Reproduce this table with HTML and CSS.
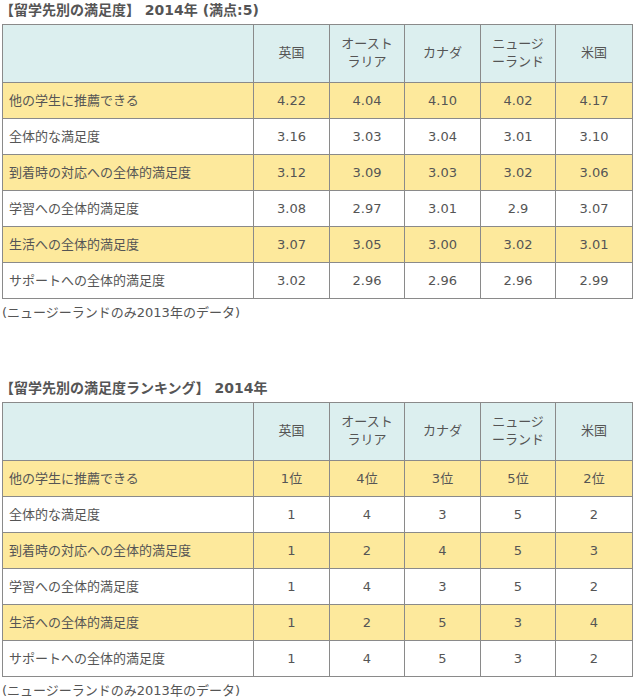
FILE: index.html
```html
<!DOCTYPE html>
<html lang="ja">
<head>
<meta charset="utf-8">
<link rel="stylesheet" href="styles.css">
</head>
<body>
<div class="page">
  <h2 class="title">【留学先別の満足度】 2014年 (満点:5)</h2>
  <table class="data">
    <colgroup>
      <col class="c-label"><col class="c-a"><col class="c-b"><col class="c-a"><col class="c-b"><col class="c-c">
    </colgroup>
    <thead>
      <tr class="head"><th></th><th>英国</th><th>オースト<br>ラリア</th><th>カナダ</th><th>ニュージ<br>ーランド</th><th>米国</th></tr>
    </thead>
    <tbody>
      <tr class="hl"><td class="label">他の学生に推薦できる</td><td>4.22</td><td>4.04</td><td>4.10</td><td>4.02</td><td>4.17</td></tr>
      <tr><td class="label">全体的な満足度</td><td>3.16</td><td>3.03</td><td>3.04</td><td>3.01</td><td>3.10</td></tr>
      <tr class="hl"><td class="label">到着時の対応への全体的満足度</td><td>3.12</td><td>3.09</td><td>3.03</td><td>3.02</td><td>3.06</td></tr>
      <tr><td class="label">学習への全体的満足度</td><td>3.08</td><td>2.97</td><td>3.01</td><td>2.9</td><td>3.07</td></tr>
      <tr class="hl"><td class="label">生活への全体的満足度</td><td>3.07</td><td>3.05</td><td>3.00</td><td>3.02</td><td>3.01</td></tr>
      <tr><td class="label">サポートへの全体的満足度</td><td>3.02</td><td>2.96</td><td>2.96</td><td>2.96</td><td>2.99</td></tr>
    </tbody>
  </table>
  <p class="note">(ニュージーランドのみ2013年のデータ)</p>

  <h2 class="title second">【留学先別の満足度ランキング】 2014年</h2>
  <table class="data">
    <colgroup>
      <col class="c-label"><col class="c-a"><col class="c-b"><col class="c-a"><col class="c-b"><col class="c-c">
    </colgroup>
    <thead>
      <tr class="head"><th></th><th>英国</th><th>オースト<br>ラリア</th><th>カナダ</th><th>ニュージ<br>ーランド</th><th>米国</th></tr>
    </thead>
    <tbody>
      <tr class="hl"><td class="label">他の学生に推薦できる</td><td>1位</td><td>4位</td><td>3位</td><td>5位</td><td>2位</td></tr>
      <tr><td class="label">全体的な満足度</td><td>1</td><td>4</td><td>3</td><td>5</td><td>2</td></tr>
      <tr class="hl"><td class="label">到着時の対応への全体的満足度</td><td>1</td><td>2</td><td>4</td><td>5</td><td>3</td></tr>
      <tr><td class="label">学習への全体的満足度</td><td>1</td><td>4</td><td>3</td><td>5</td><td>2</td></tr>
      <tr class="hl"><td class="label">生活への全体的満足度</td><td>1</td><td>2</td><td>5</td><td>3</td><td>4</td></tr>
      <tr><td class="label">サポートへの全体的満足度</td><td>1</td><td>4</td><td>5</td><td>3</td><td>2</td></tr>
    </tbody>
  </table>
  <p class="note">(ニュージーランドのみ2013年のデータ)</p>
</div>
</body>
</html>
```

FILE: styles.css
```css
html, body {
  margin: 0;
  padding: 0;
  background: #ffffff;
}

.page {
  padding-left: 2px;
  font-family: "DejaVu Sans", "Noto Sans CJK JP", sans-serif;
  color: #555555;
  font-size: 13px;
}

.title {
  margin: 0 0 4px -2px;
  font-size: 14px;
  font-weight: bold;
  line-height: 20px;
  color: #555555;
}

.title.second {
  margin-top: 55px;
}

.data {
  border-collapse: collapse;
  table-layout: fixed;
  width: 630px;
}

.c-label { width: 251px; }
.c-a { width: 76px; }
.c-b { width: 75px; }
.c-c { width: 77px; }

.data th,
.data td {
  border: 1px solid #8a8a8a;
  text-align: center;
  vertical-align: middle;
  line-height: 18px;
  padding: 9px 6px 8px;
  font-weight: normal;
  color: #555555;
}

.data .head th {
  background: #dcefef;
  padding: 10px 4px 11px;
}

.data .hl td {
  background: #fde99c;
}

.data td.label {
  text-align: left;
  padding-left: 6px;
}

.note {
  margin: 0;
  padding-top: 4px;
  line-height: 20px;
  font-size: 13px;
}
```
